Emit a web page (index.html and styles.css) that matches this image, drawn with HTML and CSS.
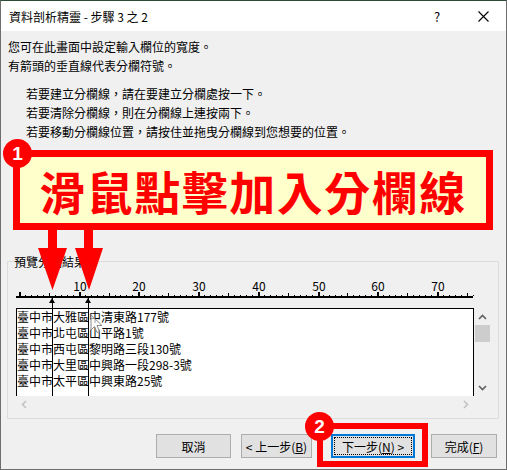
FILE: index.html
```html
<!DOCTYPE html>
<html lang="zh-Hant">
<head>
    <meta charset="UTF-8">
    <title>資料剖析精靈</title>
    <link rel="stylesheet" href="styles.css">
</head>
<body>
<div class="window">
    <div class="titlebar">
        <span class="title">資料剖析精靈 - 步驟 3 之 2</span>
        <span class="tb-btn">?</span>
        <span class="tb-btn">
            <svg width="11" height="11" viewBox="0 0 11 11"><path d="M0.5 0.5L10.5 10.5M10.5 0.5L0.5 10.5" stroke="#000" stroke-width="1.1"/></svg>
        </span>
    </div>

    <div class="content">
        <p class="intro">您可在此畫面中設定輸入欄位的寬度。<br>有箭頭的垂直線代表分欄符號。</p>
        <ul class="tips">
            <li>若要建立分欄線，請在要建立分欄處按一下。</li>
            <li>若要清除分欄線，則在分欄線上連按兩下。</li>
            <li>若要移動分欄線位置，請按住並拖曳分欄線到您想要的位置。</li>
        </ul>

        <fieldset class="preview">
            <legend>預覽分欄結果</legend>
            <div class="chart">
                <svg class="ruler" id="ruler" width="460" height="30"></svg>
                <div class="listwrap">
                    <div class="list">
                        <div>臺中市大雅區中清東路177號</div>
                        <div>臺中市北屯區山平路1號</div>
                        <div>臺中市西屯區黎明路三段130號</div>
                        <div>臺中市大里區中興路一段298-3號</div>
                        <div>臺中市太平區中興東路25號</div>
                    </div>
                    <div class="vscroll">
                        <svg width="9" height="6" viewBox="0 0 9 6"><path d="M1 5L4.5 1.5L8 5" fill="none" stroke="#606060" stroke-width="1.6"/></svg>
                        <div class="thumb"></div>
                        <svg class="down" width="9" height="6" viewBox="0 0 9 6"><path d="M1 1L4.5 4.5L8 1" fill="none" stroke="#606060" stroke-width="1.6"/></svg>
                    </div>
                    <div class="hscroll">
                        <svg width="6" height="9" viewBox="0 0 6 9"><path d="M5 1L1.5 4.5L5 8" fill="none" stroke="#c2c2c2" stroke-width="1.6"/></svg>
                        <svg width="6" height="9" viewBox="0 0 6 9"><path d="M1 1L4.5 4.5L1 8" fill="none" stroke="#c2c2c2" stroke-width="1.6"/></svg>
                    </div>
                    <div class="corner"></div>
                </div>
                <!-- 分欄線：第 6、12 個字元 -->
                <span class="brk" style="left:36px"></span>
                <span class="brk" style="left:72px"></span>
                <svg class="cursor" width="13" height="20" viewBox="0 0 13 20"><path d="M1 1V16L4.5 12.5L7 18.5L9.5 17.5L7 11.5H12Z" fill="#fff" fill-opacity="0.6" stroke="#8a8a8a" stroke-width="1"/></svg>
            </div>
        </fieldset>

        <div class="buttons">
            <button class="btn cancel">取消</button>
            <button class="btn prev">&lt; 上一步(<u>B</u>)</button>
            <button class="btn next"><span class="focus">下一步(<u>N</u>) &gt;</span></button>
            <button class="btn finish">完成(<u>F</u>)</button>
        </div>
    </div>

    <!-- 標註 -->
    <div class="note">滑鼠點擊加入分欄線</div>
    <span class="badge one">1</span>
    <svg class="arrows" width="70" height="64" viewBox="36 228 70 64">
        <path d="M48 228H57V248H67L52.5 290L38 248H48Z" fill="#f00"/>
        <path d="M84 228H93V248H103L89 290L75 248H84Z" fill="#f00"/>
    </svg>
    <div class="note-btn"></div>
    <span class="badge two">2</span>
</div>

<script>
    // 尺規：每字元約 6px，每 5 格中刻度，每 10 格長刻度加數字
    let ruler = document.getElementById("ruler");
    let ns = "http://www.w3.org/2000/svg";
    let svg = "";
    svg += '<rect x="0" y="25" width="457" height="2" fill="#000"/>';
    for(let i = 0; i <= 76; i++){
        let x = Math.round(3 + i * 5.97);
        let h = 1;
        let w = 1;
        if(i % 10 == 0){ h = 4; w = 2; }
        else if(i % 5 == 0){ h = 3; }
        svg += '<rect x="' + x + '" y="' + (25 - h) + '" width="' + w + '" height="' + h + '" fill="#000"/>';
        if(i % 10 == 0 && i > 0){
            svg += '<text x="' + (x + 1) + '" y="20" text-anchor="middle">' + i + '</text>';
        }
    }
    ruler.innerHTML = svg;
</script>
</body>
</html>
```

FILE: styles.css
```css
body {
    margin: 0;
    font-family: "Noto Sans CJK TC", "Noto Sans", sans-serif;
    font-size: 12px;
    color: #000;
}

.window {
    position: relative;
    width: 507px;
    height: 470px;
    box-sizing: border-box;
    background: #f0f0f0;
    border: 1px solid #6e6e6e;
    border-top-color: #2c4a37;
    overflow: hidden;
}

.titlebar {
    display: flex;
    align-items: center;
    height: 30px;
    background: #fff;
}
.title {
    flex: 1;
    padding-left: 8px;
}
.tb-btn {
    width: 46px;
    height: 30px;
    display: flex;
    align-items: center;
    justify-content: center;
    font-size: 13px;
}

.content {
    padding: 6px 8px 0 6px;
}
.intro {
    margin: 0 0 0 1px;
    line-height: 19px;
}
.tips {
    list-style: none;
    margin: 9px 0 0;
    padding-left: 19px;
    line-height: 19px;
}

.preview {
    width: 492px;
    box-sizing: border-box;
    margin: 111px 0 0;
    padding: 0 8px 6px;
    border: 1px solid #dcdcdc;
    min-width: 0;
}
.preview legend {
    margin-left: -3px;
    padding: 0 1px;
    line-height: 19px;
}

.chart {
    position: relative;
}
.ruler {
    display: block;
    margin-bottom: 7px;
    font-size: 12px;
}

.listwrap {
    display: grid;
    grid-template-columns: 458px 17px;
    grid-template-rows: 88px 16px;
}
.list {
    background: #fff;
    border: 1px solid #000;
    border-bottom: 0;
    line-height: 16px;
    white-space: nowrap;
}
.vscroll {
    display: flex;
    flex-direction: column;
    align-items: center;
    padding-top: 6px;
}
.vscroll .thumb {
    width: 15px;
    height: 17px;
    margin-top: 5px;
    background: #cdcdcd;
}
.vscroll .down {
    margin-top: auto;
    margin-bottom: 5px;
}
.hscroll {
    display: flex;
    justify-content: space-between;
    align-items: center;
    padding: 0 5px;
}

.brk {
    position: absolute;
    top: 27px;
    width: 1px;
    height: 98px;
    margin-left: -0.5px;
    background: #000;
}
.brk::before {
    content: "";
    position: absolute;
    top: 0;
    left: -3px;
    border-left: 3.5px solid transparent;
    border-right: 3.5px solid transparent;
    border-bottom: 5px solid #000;
}
.cursor {
    position: absolute;
    left: 74px;
    top: 43px;
}

.buttons {
    display: flex;
    justify-content: flex-end;
    margin-top: 15px;
    padding-right: 1px;
}
.btn {
    height: 24px;
    padding: 0;
    font: inherit;
    background: #e1e1e1;
    border: 1px solid #adadad;
    color: #000;
}
.cancel { width: 75px; margin-right: 10px; }
.prev { width: 71px; margin-right: 19px; }
.next {
    width: 84px;
    margin-right: 16px;
    border: 2px solid #0078d7;
    padding: 1px;
}
.next .focus {
    display: flex;
    align-items: center;
    justify-content: center;
    height: 100%;
    border: 1px dotted #000;
    box-sizing: border-box;
}
.finish { width: 66px; }

.note {
    position: absolute;
    left: 12px;
    top: 149px;
    width: 480px;
    height: 80px;
    box-sizing: border-box;
    border: 7px solid #f00;
    background: #ffffcc;
    color: #f00;
    font-size: 46px;
    font-weight: 700;
    letter-spacing: 1.5px;
    display: flex;
    align-items: center;
    justify-content: center;
}
.note-btn {
    position: absolute;
    left: 316px;
    top: 422px;
    width: 111px;
    height: 44px;
    box-sizing: border-box;
    border: 6px solid #f00;
}
.badge {
    position: absolute;
    width: 29px;
    height: 29px;
    border-radius: 50%;
    background: #f00;
    color: #fff;
    font-family: "Liberation Sans", sans-serif;
    font-size: 19px;
    font-weight: 700;
    display: flex;
    align-items: center;
    justify-content: center;
}
.badge.one { left: 2px; top: 138px; }
.badge.two { left: 304px; top: 411px; }
.arrows {
    position: absolute;
    left: 35px;
    top: 227px;
}
```
